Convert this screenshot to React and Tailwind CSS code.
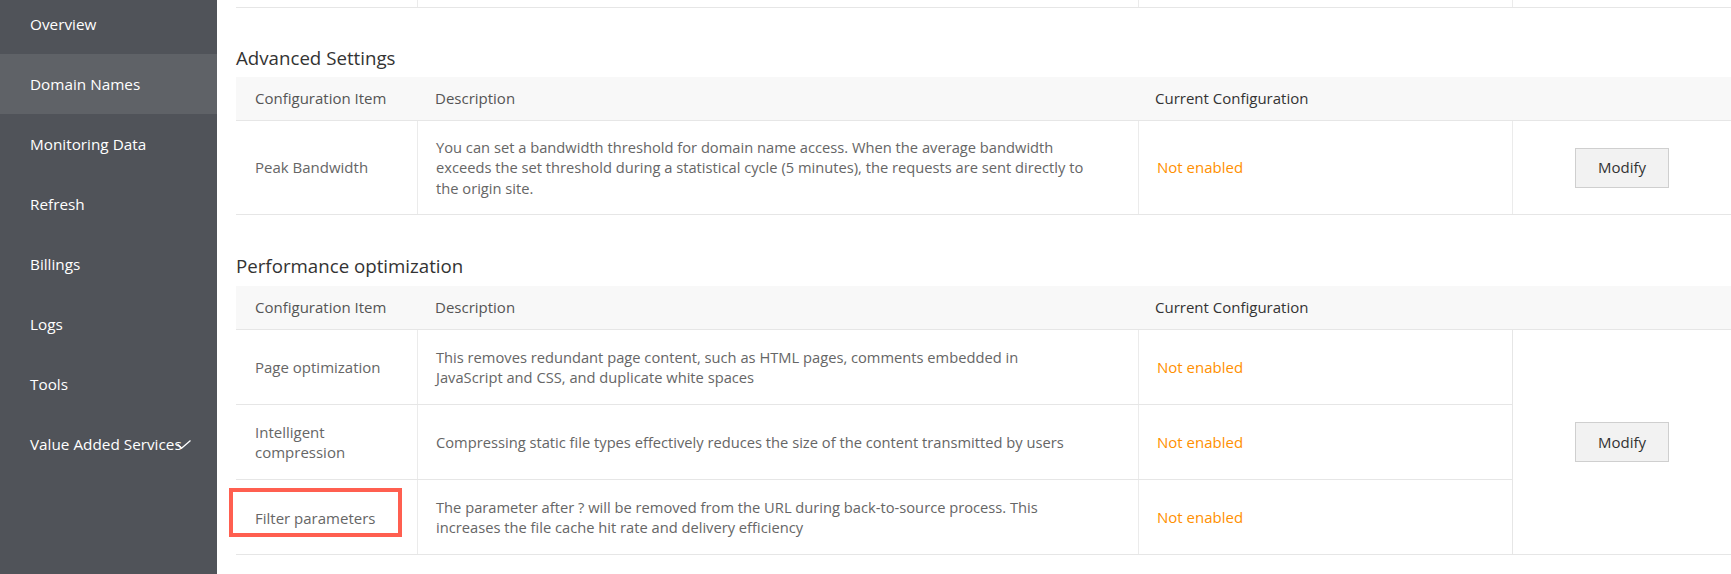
import React from 'react';

const navItems = [
  'Overview',
  'Domain Names',
  'Monitoring Data',
  'Refresh',
  'Billings',
  'Logs',
  'Tools',
  'Value Added Services',
];

const font = { fontFamily: '"Open Sans", "Noto Sans", sans-serif' };

const Check = () => (
  <svg width="14" height="9" viewBox="0 0 14 9" className="absolute left-[177px] top-[26px]" fill="none">
    <path d="M0.5 4 L4.5 8.3 L13.5 0.5" stroke="#ffffff" strokeWidth="1.3" />
  </svg>
);

const Sidebar = () => (
  <div className="w-[217px] shrink-0 bg-[#505359] min-h-[574px]">
    <div className="-mt-[6px]">
      {navItems.map((item, i) => (
        <div
          key={item}
          className={`relative h-[60px] flex items-center pl-[30px] text-[15.3px] text-white ${i === 1 ? 'bg-[#5f6267]' : ''}`}
        >
          {item}
          {item === 'Value Added Services' && <Check />}
        </div>
      ))}
    </div>
  </div>
);

const cols = 'grid grid-cols-[181px_721px_374px_1fr]';

const HeaderRow = () => (
  <div className={`${cols} h-[44px] bg-[#f8f8f8] border-b border-[#e6e6e6] text-[15px] text-[#555]`}>
    <div className="flex items-center pl-[19px]">Configuration Item</div>
    <div className="flex items-center pl-[18px]">Description</div>
    <div className="flex items-center pl-[17px] text-[#333]">Current Configuration</div>
    <div />
  </div>
);

const ModifyButton = () => (
  <button className="w-[94px] h-[40px] bg-[#f2f2f2] border border-[#cfcfcf] text-[15px] text-[#333]">
    Modify
  </button>
);

const Desc = ({ lines }) => (
  <div className="flex flex-col justify-center pl-[18px] border-l border-[#ebebeb] text-[14.7px] leading-[20.5px] text-[#666]">
    {lines.map((l) => (
      <div key={l} className="whitespace-nowrap">{l}</div>
    ))}
  </div>
);

const NotEnabled = () => (
  <div className="flex items-center pl-[18px] border-l border-[#ebebeb] text-[15px] text-[#ff9000]">Not enabled</div>
);

const perfRows = [
  {
    name: ['Page optimization'],
    lines: [
      'This removes redundant page content, such as HTML pages, comments embedded in',
      'JavaScript and CSS, and duplicate white spaces',
    ],
  },
  {
    name: ['Intelligent', 'compression'],
    lines: ['Compressing static file types effectively reduces the size of the content transmitted by users'],
  },
  {
    name: ['Filter parameters'],
    highlight: true,
    lines: [
      'The parameter after ? will be removed from the URL during back-to-source process. This',
      'increases the file cache hit rate and delivery efficiency',
    ],
  },
];

export default function App() {
  return (
    <div className="flex w-[1731px] h-[574px] overflow-hidden bg-white" style={font}>
      <Sidebar />
      <div className="flex-1 pl-[19px]">
        {/* tail of the previous table */}
        <div className={`${cols} h-[8px] border-b border-[#e6e6e6]`}>
          <div />
          <div className="border-l border-[#ebebeb]" />
          <div className="border-l border-[#ebebeb]" />
          <div className="border-l border-[#ebebeb]" />
        </div>

        <h2 className="mt-[38px] h-[24px] leading-[24px] text-[18.7px] text-[#333]">Advanced Settings</h2>
        <div className="mt-[7px]">
          <HeaderRow />
          <div className={`${cols} h-[94px] border-b border-[#e6e6e6]`}>
            <div className="flex items-center pl-[19px] text-[15px] text-[#666]">Peak Bandwidth</div>
            <Desc
              lines={[
                'You can set a bandwidth threshold for domain name access. When the average bandwidth',
                'exceeds the set threshold during a statistical cycle (5 minutes), the requests are sent directly to',
                'the origin site.',
              ]}
            />
            <NotEnabled />
            <div className="flex items-center justify-center border-l border-[#ebebeb]">
              <ModifyButton />
            </div>
          </div>
        </div>

        <h2 className="mt-[39px] h-[24px] leading-[24px] text-[18.7px] text-[#333]">Performance optimization</h2>
        <div className="mt-[8px]">
          <HeaderRow />
          <div className={`${cols}`}>
            <div className="col-span-3">
              {perfRows.map((r) => (
                <div key={r.name[0]} className="grid grid-cols-[181px_721px_374px] h-[75px] border-b border-[#e6e6e6]">
                  <div className="flex items-center pl-[19px] pr-[4px] text-[15px] leading-[20px] text-[#666]">
                    {r.highlight ? (
                      <div className="-ml-[26px] mb-[9px] w-[173px] h-[49px] border-[4px] border-[#ff5f50] flex items-center pl-[22px] pt-[10px]">
                        {r.name[0]}
                      </div>
                    ) : (
                      <div>
                        {r.name.map((n) => (
                          <div key={n}>{n}</div>
                        ))}
                      </div>
                    )}
                  </div>
                  <Desc lines={r.lines} />
                  <NotEnabled />
                </div>
              ))}
            </div>
            <div className="flex items-center justify-center border-l border-b border-[#e6e6e6]">
              <ModifyButton />
            </div>
          </div>
        </div>
      </div>
    </div>
  );
}
